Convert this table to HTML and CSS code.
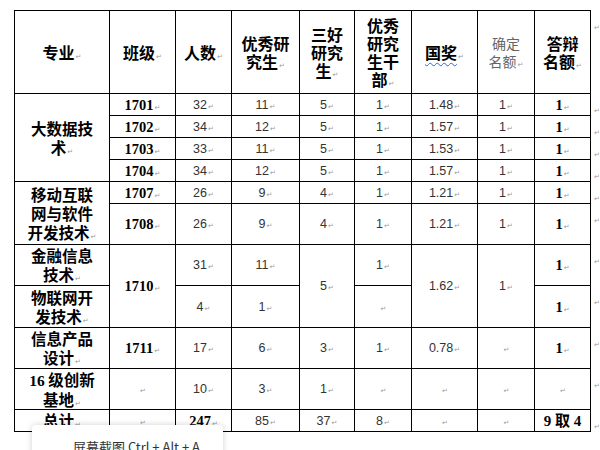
FILE: index.html
```html
<!DOCTYPE html>
<html lang="zh-CN">
<head>
<meta charset="utf-8">
<title>研究生名额分配表</title>
<link rel="stylesheet" href="styles.css">
</head>
<body>
<div class="page">
  <table class="quota">
    <colgroup>
      <col class="c-major"><col class="c-class"><col class="c-num"><col class="c-exc"><col class="c-san"><col class="c-cadre"><col class="c-nat"><col class="c-conf"><col class="c-def"><col class="c-eor">
    </colgroup>
    <tr class="r-head">
      <th class="hd">专业<span class="pm">↵</span></th>
      <th class="hd">班级<span class="pm">↵</span></th>
      <th class="hd">人数<span class="pm">↵</span></th>
      <th class="hd">优秀研<br>究生<span class="pm">↵</span></th>
      <th class="hd">三好<br>研究<br>生<span class="pm">↵</span></th>
      <th class="hd">优秀<br>研究<br>生干<br>部<span class="pm">↵</span></th>
      <th class="hd"><span class="spell">国奖</span><span class="pm">↵</span></th>
      <th class="hd light">确定<br>名额<span class="pm">↵</span></th>
      <th class="hd">答辩<br>名额<span class="pm">↵</span></th>
      <td class="eor"><span class="pm">↵</span></td>
    </tr>
    <tr class="r23">
      <td class="lbl" rowspan="4">大数据技<br>术<span class="pm">↵</span></td>
      <td class="cls">1701<span class="pm">↵</span></td>
      <td class="n">32<span class="pm">↵</span></td>
      <td class="n">11<span class="pm">↵</span></td>
      <td class="n">5<span class="pm">↵</span></td>
      <td class="n">1<span class="pm">↵</span></td>
      <td class="n">1.48<span class="pm">↵</span></td>
      <td class="n">1<span class="pm">↵</span></td>
      <td class="cls">1<span class="pm">↵</span></td>
      <td class="eor"><span class="pm">↵</span></td>
    </tr>
    <tr class="r20">
      <td class="cls">1702<span class="pm">↵</span></td>
      <td class="n">34<span class="pm">↵</span></td>
      <td class="n">12<span class="pm">↵</span></td>
      <td class="n">5<span class="pm">↵</span></td>
      <td class="n">1<span class="pm">↵</span></td>
      <td class="n">1.57<span class="pm">↵</span></td>
      <td class="n">1<span class="pm">↵</span></td>
      <td class="cls">1<span class="pm">↵</span></td>
      <td class="eor"><span class="pm">↵</span></td>
    </tr>
    <tr class="r21">
      <td class="cls">1703<span class="pm">↵</span></td>
      <td class="n">33<span class="pm">↵</span></td>
      <td class="n">11<span class="pm">↵</span></td>
      <td class="n">5<span class="pm">↵</span></td>
      <td class="n">1<span class="pm">↵</span></td>
      <td class="n">1.53<span class="pm">↵</span></td>
      <td class="n">1<span class="pm">↵</span></td>
      <td class="cls">1<span class="pm">↵</span></td>
      <td class="eor"><span class="pm">↵</span></td>
    </tr>
    <tr class="r21">
      <td class="cls">1704<span class="pm">↵</span></td>
      <td class="n">34<span class="pm">↵</span></td>
      <td class="n">12<span class="pm">↵</span></td>
      <td class="n">5<span class="pm">↵</span></td>
      <td class="n">1<span class="pm">↵</span></td>
      <td class="n">1.57<span class="pm">↵</span></td>
      <td class="n">1<span class="pm">↵</span></td>
      <td class="cls">1<span class="pm">↵</span></td>
      <td class="eor"><span class="pm">↵</span></td>
    </tr>
    <tr class="r22">
      <td class="lbl" rowspan="2">移动互联<br>网与软件<br>开发技术<span class="pm">↵</span></td>
      <td class="cls">1707<span class="pm">↵</span></td>
      <td class="n">26<span class="pm">↵</span></td>
      <td class="n">9<span class="pm">↵</span></td>
      <td class="n">4<span class="pm">↵</span></td>
      <td class="n">1<span class="pm">↵</span></td>
      <td class="n">1.21<span class="pm">↵</span></td>
      <td class="n">1<span class="pm">↵</span></td>
      <td class="cls">1<span class="pm">↵</span></td>
      <td class="eor"><span class="pm">↵</span></td>
    </tr>
    <tr class="r42">
      <td class="cls">1708<span class="pm">↵</span></td>
      <td class="n">26<span class="pm">↵</span></td>
      <td class="n">9<span class="pm">↵</span></td>
      <td class="n">4<span class="pm">↵</span></td>
      <td class="n">1<span class="pm">↵</span></td>
      <td class="n">1.21<span class="pm">↵</span></td>
      <td class="n">1<span class="pm">↵</span></td>
      <td class="cls">1<span class="pm">↵</span></td>
      <td class="eor"><span class="pm">↵</span></td>
    </tr>
    <tr class="r42">
      <td class="lbl">金融信息<br>技术<span class="pm">↵</span></td>
      <td class="cls" rowspan="2">1710<span class="pm">↵</span></td>
      <td class="n">31<span class="pm">↵</span></td>
      <td class="n">11<span class="pm">↵</span></td>
      <td class="n" rowspan="2">5<span class="pm">↵</span></td>
      <td class="n">1<span class="pm">↵</span></td>
      <td class="n" rowspan="2">1.62<span class="pm">↵</span></td>
      <td class="n" rowspan="2">1<span class="pm">↵</span></td>
      <td class="cls">1<span class="pm">↵</span></td>
      <td class="eor"><span class="pm">↵</span></td>
    </tr>
    <tr class="r43">
      <td class="lbl">物联网开<br>发技术<span class="pm">↵</span></td>
      <td class="n">4<span class="pm">↵</span></td>
      <td class="n">1<span class="pm">↵</span></td>
      <td class="empty"><span class="pm">↵</span></td>
      <td class="cls">1<span class="pm">↵</span></td>
      <td class="eor"><span class="pm">↵</span></td>
    </tr>
    <tr class="r42">
      <td class="lbl">信息产品<br>设计<span class="pm">↵</span></td>
      <td class="cls">1711<span class="pm">↵</span></td>
      <td class="n">17<span class="pm">↵</span></td>
      <td class="n">6<span class="pm">↵</span></td>
      <td class="n">3<span class="pm">↵</span></td>
      <td class="n">1<span class="pm">↵</span></td>
      <td class="n">0.78<span class="pm">↵</span></td>
      <td class="empty"><span class="pm">↵</span></td>
      <td class="cls">1<span class="pm">↵</span></td>
      <td class="eor"><span class="pm">↵</span></td>
    </tr>
    <tr class="r42">
      <td class="lbl"><span class="lat">16</span> 级创新<br>基地<span class="pm">↵</span></td>
      <td class="empty"><span class="pm">↵</span></td>
      <td class="n">10<span class="pm">↵</span></td>
      <td class="n">3<span class="pm">↵</span></td>
      <td class="n">1<span class="pm">↵</span></td>
      <td class="empty"><span class="pm">↵</span></td>
      <td class="empty"><span class="pm">↵</span></td>
      <td class="empty"><span class="pm">↵</span></td>
      <td class="empty"><span class="pm">↵</span></td>
      <td class="eor"><span class="pm">↵</span></td>
    </tr>
    <tr class="r21">
      <td class="lbl">总计<span class="pm">↵</span></td>
      <td class="empty"><span class="pm">↵</span></td>
      <td class="cls">247<span class="pm">↵</span></td>
      <td class="n">85<span class="pm">↵</span></td>
      <td class="n">37<span class="pm">↵</span></td>
      <td class="n">8<span class="pm">↵</span></td>
      <td class="empty"><span class="pm">↵</span></td>
      <td class="empty"><span class="pm">↵</span></td>
      <td class="cls total">9 取 4</td>
      <td class="eor"><span class="pm">↵</span></td>
    </tr>
  </table>
  <div class="tip">屏幕截图 Ctrl + Alt + A</div>
</div>
</body>
</html>
```

FILE: styles.css
```css
html, body {
  margin: 0;
  padding: 0;
  background: #fff;
}
.page {
  position: relative;
  width: 600px;
  height: 450px;
  overflow: hidden;
  padding: 10px 0 0 14px;
  box-sizing: border-box;
}
.quota {
  border-collapse: collapse;
  table-layout: fixed;
  width: 587px;
  color: #000;
  font-size: 12px;
  line-height: 14px;
}
.c-major { width: 95px; }
.c-class { width: 66px; }
.c-num { width: 56px; }
.c-exc { width: 68px; }
.c-san { width: 55px; }
.c-cadre { width: 57px; }
.c-nat { width: 66px; }
.c-conf { width: 57px; }
.c-def { width: 56px; }
.c-eor { width: 11px; }

.quota th, .quota td {
  border: 1px solid #000;
  padding: 0 4px;
  text-align: center;
  vertical-align: middle;
  white-space: nowrap;
  overflow: hidden;
}
/* row heights are the line pitch minus the shared 1px rule */
.r-head { height: 83px; }
.r20 { height: 19px; }
.r21 { height: 20px; }
.r22 { height: 21px; }
.r23 { height: 22px; }
.r42 { height: 41px; }
.r43 { height: 42px; }

.hd {
  font-family: "Noto Sans CJK SC", sans-serif;
  font-weight: 700;
  font-size: 16px;
  line-height: 18px;
}
.hd.light {
  font-weight: 400;
  font-size: 14px;
  color: #666;
}
.spell {
  text-decoration-line: underline;
  text-decoration-style: wavy;
  text-decoration-color: #3a5fd8;
  text-decoration-thickness: 1px;
  text-underline-offset: 3px;
}
.lbl {
  font-family: "Noto Sans CJK SC", sans-serif;
  font-weight: 700;
  font-size: 15.5px;
  line-height: 19px;
}
.lat {
  font-family: "Liberation Serif", serif;
}
.cls {
  font-family: "Liberation Serif", "Noto Sans CJK SC", serif;
  font-weight: 700;
  font-size: 14.5px;
  line-height: 16px;
}
.total {
  font-size: 15px;
  padding: 0 2px;
}
.n {
  font-family: "Liberation Sans", sans-serif;
  font-size: 12.5px;
  color: #333;
  line-height: 16px;
}
.empty {
  text-align: right;
  padding-right: 7px;
}
.quota .eor {
  border: none;
  text-align: left;
  vertical-align: top;
  padding: 8px 0 0 2px;
}
.pm {
  font-family: "DejaVu Sans", sans-serif;
  font-weight: 400;
  font-size: 7px;
  line-height: 0;
  color: #9a9a9a;
  margin-left: 1px;
}
.tip {
  position: absolute;
  left: 32px;
  top: 425px;
  width: 191px;
  height: 44px;
  background: #fff;
  border-radius: 4px;
  box-shadow: 0 0 6px rgba(0, 0, 0, 0.18);
  box-sizing: border-box;
  padding: 13px 0 0 41px;
  font-family: "Noto Sans CJK SC", sans-serif;
  font-size: 13px;
  line-height: 18px;
  color: #333;
}
```
